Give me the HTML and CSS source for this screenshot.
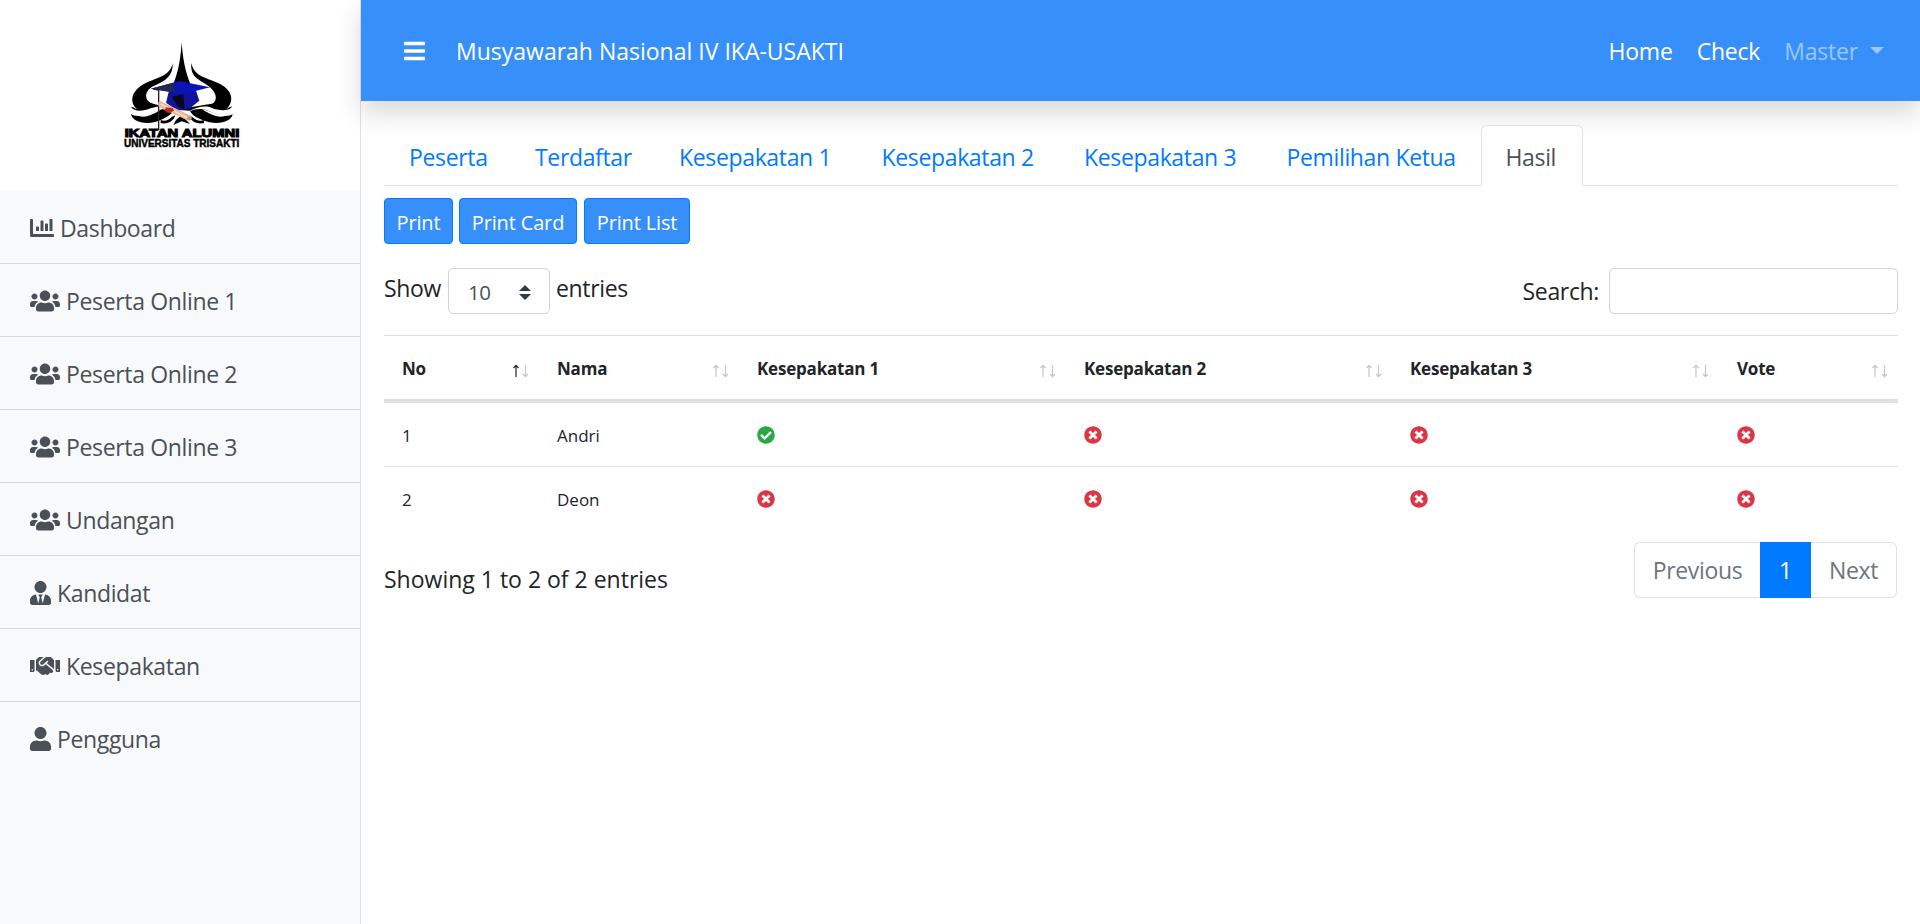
FILE: index.html
```html
<!DOCTYPE html>
<html lang="id">
<head>
<meta charset="utf-8">
<title>Musyawarah Nasional IV IKA-USAKTI</title>
<link rel="stylesheet" href="styles.css">
</head>
<body>
<svg class="sprite" aria-hidden="true">
  <symbol id="chart" viewBox="0 0 512 512"><path d="M332.8 320h38.4c6.4 0 12.8-6.4 12.8-12.8V172.8c0-6.4-6.4-12.8-12.8-12.8h-38.4c-6.4 0-12.8 6.4-12.8 12.8v134.4c0 6.4 6.4 12.8 12.8 12.8zm96 0h38.4c6.4 0 12.8-6.4 12.8-12.8V76.8c0-6.4-6.4-12.8-12.8-12.8h-38.4c-6.4 0-12.8 6.4-12.8 12.8v230.4c0 6.4 6.4 12.8 12.8 12.8zm-288 0h38.4c6.4 0 12.8-6.4 12.8-12.8v-70.4c0-6.4-6.4-12.8-12.8-12.8h-38.4c-6.4 0-12.8 6.4-12.8 12.8v70.4c0 6.4 6.4 12.8 12.8 12.8zm96 0h38.4c6.4 0 12.8-6.4 12.8-12.8V108.8c0-6.4-6.4-12.8-12.8-12.8h-38.4c-6.4 0-12.8 6.4-12.8 12.8v198.4c0 6.4 6.4 12.8 12.8 12.8zM496 384H64V80c0-8.840-7.160-16-16-16H16C7.160 64 0 71.160 0 80v336c0 17.670 14.330 32 32 32h464c8.840 0 16-7.160 16-16v-32c0-8.840-7.160-16-16-16z"/></symbol>
  <symbol id="users" viewBox="0 0 640 512"><path d="M96 224c35.3 0 64-28.700 64-64s-28.700-64-64-64-64 28.700-64 64 28.700 64 64 64zm448 0c35.300 0 64-28.700 64-64s-28.700-64-64-64-64 28.700-64 64 28.700 64 64 64zm32 32h-64c-17.600 0-33.500 7.100-45.100 18.600 40.300 22.100 68.900 62 75.100 109.400h66c17.700 0 32-14.300 32-32v-32c0-35.300-28.700-64-64-64zm-256 0c61.900 0 112-50.100 112-112S381.900 32 320 32 208 82.100 208 144s50.100 112 112 112zm76.800 32h-8.300c-20.800 10-43.900 16-68.500 16s-47.600-6-68.500-16h-8.300C179.600 288 128 339.600 128 403.200V432c0 26.500 21.500 48 48 48h288c26.500 0 48-21.500 48-48v-28.800c0-63.600-51.600-115.200-115.200-115.200zm-223.700-13.400C161.500 263.100 145.600 256 128 256H64c-35.300 0-64 28.700-64 64v32c0 17.700 14.300 32 32 32h65.900c6.300-47.400 34.900-87.300 75.200-109.400z"/></symbol>
  <symbol id="tie" viewBox="0 0 448 512"><path d="M224 256c70.700 0 128-57.300 128-128S294.700 0 224 0 96 57.300 96 128s57.300 128 128 128zm95.800 32.600L272 480l-32-136 32-56h-96l32 56-32 136-47.800-191.400C56.900 292 0 350.300 0 422.400V464c0 26.500 21.500 48 48 48h352c26.500 0 48-21.500 48-48v-41.600c0-72.100-56.900-130.400-128.200-133.800z"/></symbol>
  <symbol id="user" viewBox="0 0 448 512"><path d="M224 256c70.700 0 128-57.300 128-128S294.700 0 224 0 96 57.300 96 128s57.300 128 128 128zm89.600 32h-16.700c-22.200 10.200-46.900 16-72.900 16s-50.600-5.800-72.900-16h-16.700C60.200 288 0 348.200 0 422.400V464c0 26.500 21.500 48 48 48h352c26.500 0 48-21.500 48-48v-41.600c0-74.200-60.200-134.400-134.400-134.400z"/></symbol>
  <symbol id="shake" viewBox="0 0 640 512"><path d="M434.700 64h-85.900c-8 0-15.700 3-21.600 8.400l-98.300 90c-.1.1-.2.300-.3.400-16.600 15.600-16.300 40.500-2.100 56 12.700 13.900 39.400 17.600 56.100 2.700.1-.1.300-.1.400-.2l79.900-73.200c6.500-5.900 16.700-5.500 22.600 1 6 6.500 5.500 16.600-1 22.600l-26.100 23.900L504 313.800c2.900 2.400 5.500 5 7.900 7.700V128l-54.600-54.600c-5.900-6-14.100-9.400-22.600-9.400zM544 128.200v223.900c0 17.700 14.300 32 32 32h64V128.200h-96zm48 223.900c-8.800 0-16-7.200-16-16s7.200-16 16-16 16 7.200 16 16-7.200 16-16 16zM0 384h64c17.700 0 32-14.300 32-32V128.200H0V384zm48-63.900c8.800 0 16 7.200 16 16s-7.200 16-16 16-16-7.200-16-16c0-8.900 7.200-16 16-16zm435.900 18.600L334.600 217.500l-30 27.500c-29.700 27.100-75.200 24.500-101.700-4.400-26.900-29.400-24.800-74.900 4.400-101.700L289.100 64h-83.800c-8.500 0-16.600 3.400-22.600 9.400L128 128v223.900h18.300l90.500 81.900c27.400 22.300 67.700 18.100 90-9.300l.2-.2 17.900 15.500c15.900 13 39.400 10.500 52.300-5.400l31.400-38.600 5.400 4.400c13.700 11.100 33.900 9.100 45-4.700l9.500-11.700c11.200-13.800 9.100-33.900-4.600-45.100z"/></symbol>
  <symbol id="bars" viewBox="0 0 448 512"><path d="M16 132h416c8.800 0 16-7.200 16-16V76c0-8.800-7.200-16-16-16H16C7.200 60 0 67.200 0 76v40c0 8.800 7.200 16 16 16zm0 160h416c8.800 0 16-7.200 16-16v-40c0-8.800-7.200-16-16-16H16c-8.800 0-16 7.200-16 16v40c0 8.800 7.200 16 16 16zm0 160h416c8.800 0 16-7.200 16-16v-40c0-8.800-7.200-16-16-16H16c-8.800 0-16 7.200-16 16v40c0 8.800 7.200 16 16 16z"/></symbol>
  <symbol id="yes" viewBox="0 0 512 512"><path d="M504 256c0 137-111 248-248 248S8 393 8 256 119 8 256 8s248 111 248 248zM227.300 387.300l184-184c6.200-6.200 6.200-16.400 0-22.600l-22.600-22.600c-6.200-6.200-16.400-6.200-22.600 0L216 308.100l-70.100-70.100c-6.200-6.200-16.400-6.200-22.600 0l-22.600 22.600c-6.200 6.200-6.200 16.400 0 22.600l104 104c6.200 6.300 16.400 6.300 22.600.1z"/></symbol>
  <symbol id="no" viewBox="0 0 512 512"><path d="M256 8C119 8 8 119 8 256s111 248 248 248 248-111 248-248S393 8 256 8zm121.600 313.100c4.700 4.700 4.700 12.300 0 17L338 377.600c-4.700 4.700-12.300 4.700-17 0L256 312l-65.100 65.600c-4.700 4.700-12.300 4.700-17 0L134.400 338c-4.700-4.700-4.700-12.300 0-17l65.600-65-65.600-65.100c-4.700-4.700-4.700-12.300 0-17l39.600-39.600c4.700-4.700 12.300-4.700 17 0l65 65.700 65.100-65.600c4.700-4.700 12.300-4.700 17 0l39.600 39.600c4.700 4.700 4.700 12.300 0 17L312 256l65.600 65.100z"/></symbol>
  <symbol id="sort" viewBox="0 0 16 14"><path class="sort-up" d="M3 13V1.500M.5 4L3 1.300 5.500 4"/><path class="sort-down" d="M12.500 1v11.500M10 10l2.500 2.700L15 10"/></symbol>
</svg>

<div class="wrapper">
  <aside class="sidebar">
    <div class="brand">
      <svg class="logo" viewBox="0 0 570 450" role="img" aria-label="Ikatan Alumni Universitas Trisakti">
        <g fill="#000">
          <path d="M275 66C272 110 267 150 250 192H301C284 150 278 110 275 66z"/>
          <path d="M248 129C240 170 200 172 166 190C120 213 118 250 142 268C128 262 124 257 124 262C132 276 160 274 182 265C205 255 225 262 232 268L300 272C320 262 345 254 366 264C385 272 415 274 425 262C427 256 418 262 408 268C434 246 430 208 382 188C345 172 312 168 304 129C300 170 325 178 350 194C385 216 384 248 362 252C330 256 310 262 275 264C240 262 215 258 192 252C160 245 160 210 196 196C226 182 250 168 248 129z"/>
          <path d="M123 282C140 294 170 286 200 272C222 264 240 270 250 274C235 292 215 300 195 306C160 314 126 304 123 282z"/>
          <path d="M428 282C411 294 381 286 355 272C335 264 315 266 300 274C310 292 335 300 356 306C391 314 425 304 428 282z"/>
          <path d="M212 300C225 306 235 300 246 290L256 286C250 305 232 314 212 309z"/>
          <path d="M342 300C328 306 318 300 306 290L296 286C302 305 322 314 342 309z"/>
          <path d="M258 300L275 286L300 312L275 304L250 315z"/>
        </g>
        <path d="M135 283C165 291 190 272 214 268C190 284 160 300 135 283zM416 283C386 291 361 272 337 268C361 284 391 300 416 283z" fill="#fff"/>
        <path d="M236 216L228 248L262 272L298 266L328 242L318 212z" fill="#12129a"/>
        <path d="M246 230L280 222L284 270L262 258z" fill="#080824"/>
        <path d="M182 206L268 183L360 202L278 223z" fill="#0a14b4"/>
        <path d="M182 206L250 188L252 217L236 214z" fill="#25294d"/>
        <path d="M190 207L206 210V330" fill="none" stroke="#222" stroke-width="4"/>
        <path d="M211 243L302 287C309 293 303 303 295 302L208 262C202 254 204 245 211 243z" fill="#e4b99a"/>
        <path d="M212 252L292 294" stroke="#f5ddc8" stroke-width="5"/>
        <path d="M228 262L248 264L252 272L236 280L224 272z" fill="#c22a20"/>
        <circle cx="298" cy="295" r="6" fill="#c98f6a"/>
        <text class="logo-text heavy" x="104" y="350" font-size="32" textLength="344" lengthAdjust="spacingAndGlyphs">IKATAN ALUMNI</text>
        <text class="logo-text" x="102" y="381" font-size="33" textLength="346" lengthAdjust="spacingAndGlyphs">UNIVERSITAS TRISAKTI</text>
      </svg>
    </div>
    <nav class="menu">
      <a class="item"><svg class="ic w24"><use href="#chart"/></svg><span>Dashboard</span></a>
      <a class="item"><svg class="ic w30"><use href="#users"/></svg><span>Peserta Online 1</span></a>
      <a class="item"><svg class="ic w30"><use href="#users"/></svg><span>Peserta Online 2</span></a>
      <a class="item"><svg class="ic w30"><use href="#users"/></svg><span>Peserta Online 3</span></a>
      <a class="item"><svg class="ic w30"><use href="#users"/></svg><span>Undangan</span></a>
      <a class="item"><svg class="ic w21"><use href="#tie"/></svg><span>Kandidat</span></a>
      <a class="item"><svg class="ic w30"><use href="#shake"/></svg><span>Kesepakatan</span></a>
      <a class="item"><svg class="ic w21"><use href="#user"/></svg><span>Pengguna</span></a>
    </nav>
  </aside>

  <div class="page">
    <header class="navbar">
      <svg class="ic w21"><use href="#bars"/></svg>
      <span class="title">Musyawarah Nasional IV IKA-USAKTI</span>
      <nav class="links">
        <a class="link-home">Home</a>
        <a class="link-check">Check</a>
        <a class="muted">Master</a>
        <i class="caret"></i>
      </nav>
    </header>

    <main class="content">
      <nav class="tabs">
        <a class="tab t1">Peserta</a>
        <a class="tab t2">Terdaftar</a>
        <a class="tab t3">Kesepakatan 1</a>
        <a class="tab t3">Kesepakatan 2</a>
        <a class="tab t3">Kesepakatan 3</a>
        <a class="tab t4">Pemilihan Ketua</a>
        <a class="tab t5 active">Hasil</a>
      </nav>

      <div class="buttons">
        <button class="btn b1">Print</button>
        <button class="btn b2">Print Card</button>
        <button class="btn b3">Print List</button>
      </div>

      <div class="controls">
        <div class="length"><span class="show">Show</span>
          <div class="select"><span>10</span><svg class="updown" viewBox="0 0 4 5"><path d="M2 0L0 2h4zm0 5L0 3h4z"/></svg></div>
          <span>entries</span></div>
        <label class="search"><span>Search:</span><input class="field" type="text"></label>
      </div>

      <table class="table">
        <colgroup><col class="c1"><col class="c2"><col class="c3"><col class="c4"><col class="c3"><col class="c5"></colgroup>
        <thead>
          <tr>
            <th><div class="head asc"><span>No</span><svg class="sort"><use href="#sort"/></svg></div></th>
            <th><div class="head"><span>Nama</span><svg class="sort"><use href="#sort"/></svg></div></th>
            <th><div class="head"><span>Kesepakatan 1</span><svg class="sort"><use href="#sort"/></svg></div></th>
            <th><div class="head"><span>Kesepakatan 2</span><svg class="sort"><use href="#sort"/></svg></div></th>
            <th><div class="head"><span>Kesepakatan 3</span><svg class="sort"><use href="#sort"/></svg></div></th>
            <th><div class="head"><span>Vote</span><svg class="sort"><use href="#sort"/></svg></div></th>
          </tr>
        </thead>
        <tbody>
          <tr><td>1</td><td>Andri</td><td><svg class="mark ok"><use href="#yes"/></svg></td><td><svg class="mark"><use href="#no"/></svg></td><td><svg class="mark"><use href="#no"/></svg></td><td><svg class="mark"><use href="#no"/></svg></td></tr>
          <tr><td>2</td><td>Deon</td><td><svg class="mark"><use href="#no"/></svg></td><td><svg class="mark"><use href="#no"/></svg></td><td><svg class="mark"><use href="#no"/></svg></td><td><svg class="mark"><use href="#no"/></svg></td></tr>
        </tbody>
      </table>

      <div class="footer">
        <span class="info">Showing 1 to 2 of 2 entries</span>
        <div class="pager"><a class="pg prev">Previous</a><a class="pg on">1</a><a class="pg next">Next</a></div>
      </div>
    </main>
  </div>
</div>
</body>
</html>
```

FILE: styles.css
```css
* { box-sizing: border-box; }
body {
  margin: 0;
  height: 924px;
  overflow: hidden;
  background: #fff;
  color: #212529;
  font: 23px/36px "Open Sans", "Noto Sans", sans-serif;
  letter-spacing: -0.35px;
  white-space: nowrap;
}
.sprite { display: none; }
.wrapper { display: flex; height: 924px; }

/* Sidebar */
.sidebar {
  flex: none;
  width: 361px;
  background: #f8f9fa;
  border-right: 1px solid #dee2e6;
}
.brand { height: 191px; padding: 20px 0 0 90px; background: #fff; }
.logo { display: block; width: 190px; height: 150px; }
.logo-text { font-family: "Liberation Sans", Arial, sans-serif; font-weight: 700; letter-spacing: 0; stroke: #000; stroke-width: 1.5px; }
.heavy { stroke-width: 3px; }
.item {
  position: relative;
  display: flex;
  align-items: center;
  gap: 6px;
  height: 73px;
  padding: 2px 0 0 30px;
  background: #f8f9fa;
  border-bottom: 1px solid #d6d8db;
  color: #495057;
}
.item:last-child { border-bottom: 0; padding-bottom: 1px; }
.ic { flex: none; display: block; height: 24px; fill: currentColor; }
.w21 { width: 21px; }
.w24 { width: 24px; }
.w30 { width: 30px; }

/* Top bar */
.page { flex: 1; min-width: 0; }
.navbar {
  display: flex;
  align-items: center;
  height: 101px;
  padding: 0 36px 0 43px;
  background: #378ffa;
  color: #fff;
  letter-spacing: -0.2px;
  box-shadow: 0 12px 24px rgba(0, 0, 0, .15);
}
.title { margin-left: 31px; letter-spacing: 0; }
.links { display: flex; align-items: center; margin-left: auto; }
.link-home, .link-check { margin-right: 24px; }
.muted { color: rgba(255, 255, 255, .5); }
.caret {
  margin: 0 0 0 12px;
  border: 7px solid transparent;
  border-top-color: rgba(255, 255, 255, .5);
  border-bottom: 0;
}

/* Tabs */
.content { padding: 24px 22px 0 23px; }
.tabs { display: flex; height: 61px; border-bottom: 1px solid #dee2e6; }
.tab {
  height: 61px;
  padding: 13px 0 0 24px;
  border: 1px solid transparent;
  border-bottom: 0;
  color: #007bff;
}
.t1 { width: 126px; }
.t2 { width: 144px; }
.t3 { width: 202.5px; }
.t4 { width: 219px; }
.t5 { width: 102px; }
.tab.active {
  background: #fff;
  border-color: #dee2e6;
  border-radius: 6px 6px 0 0;
  color: #495057;
}

/* Print buttons */
.buttons { display: flex; gap: 6px; margin-top: 12px; }
.btn {
  height: 46px;
  padding: 3px 0 0;
  border: 1px solid #007bff;
  border-radius: 4px;
  background: #378ffa;
  color: #fff;
  font: inherit;
  font-size: 20px;
  letter-spacing: -0.15px;
}
.b1 { width: 69px; }
.b2 { width: 118px; }
.b3 { width: 106px; margin-left: 1px; }

/* Length and search */
.controls { display: flex; justify-content: space-between; height: 46px; margin-top: 24px; }
.length { display: flex; line-height: 40px; }
.show { width: 64px; }
.select {
  display: flex;
  align-items: center;
  justify-content: space-between;
  width: 102px;
  height: 46px;
  margin-right: 6px;
  padding: 2px 18px 0 19px;
  border: 1px solid #ced4da;
  border-radius: 5px;
  color: #495057;
  font-size: 20.5px;
}
.updown { width: 12px; height: 15px; fill: #343a40; }
.search { display: flex; line-height: 46px; }
.field {
  width: 289px;
  height: 46px;
  margin-left: 10px;
  border: 1px solid #ced4da;
  border-radius: 5px;
  background: #fff;
}

/* Table */
.table {
  width: 1514px;
  margin-top: 21px;
  border-collapse: separate;
  border-spacing: 0;
  table-layout: fixed;
  font-size: 17px;
  line-height: 27px;
  letter-spacing: -0.2px;
}
.c1 { width: 155px; }
.c2 { width: 200px; }
.c3 { width: 327px; }
.c4 { width: 326px; }
.c5 { width: 179px; }
.table th {
  height: 68px;
  padding: 0 10px 0 18px;
  border-top: 1px solid #dee2e6;
  border-bottom: 4px solid #dee2e6;
  text-align: left;
  font-weight: 700;
}
.head { display: flex; align-items: center; justify-content: space-between; padding-top: 1px; }
.sort { width: 16px; height: 14px; margin-top: 5px; fill: none; stroke: #c3c5c7; stroke-width: 1.2; }
.sort-up { stroke: var(--up, #c3c5c7); }
.asc { --up: #212529; }
.table td { height: 63px; padding: 1px 0 0 18px; }
.table td:nth-child(2) { letter-spacing: 0; }
.table tr:last-child td { height: 64px; border-top: 1px solid #dee2e6; }
.mark { display: block; width: 18px; height: 18px; margin: -1px 0 0 -0.5px; fill: #dc3545; }
.mark.ok { fill: #28a745; }

/* Footer */
.footer { display: flex; justify-content: space-between; margin-top: 12px; padding-right: 1px; }
.info { margin-top: 19px; letter-spacing: 0; }
.pager { display: flex; height: 56px; line-height: 54px; text-align: center; }
.pg { height: 56px; border: 1px solid #dee2e6; color: #6c757d; }
.prev { width: 126px; border-right: 0; border-radius: 6px 0 0 6px; }
.on { width: 51px; border-color: #007bff; background: #007bff; color: #fff; }
.next { width: 86px; border-left: 0; border-radius: 0 6px 6px 0; }
```
